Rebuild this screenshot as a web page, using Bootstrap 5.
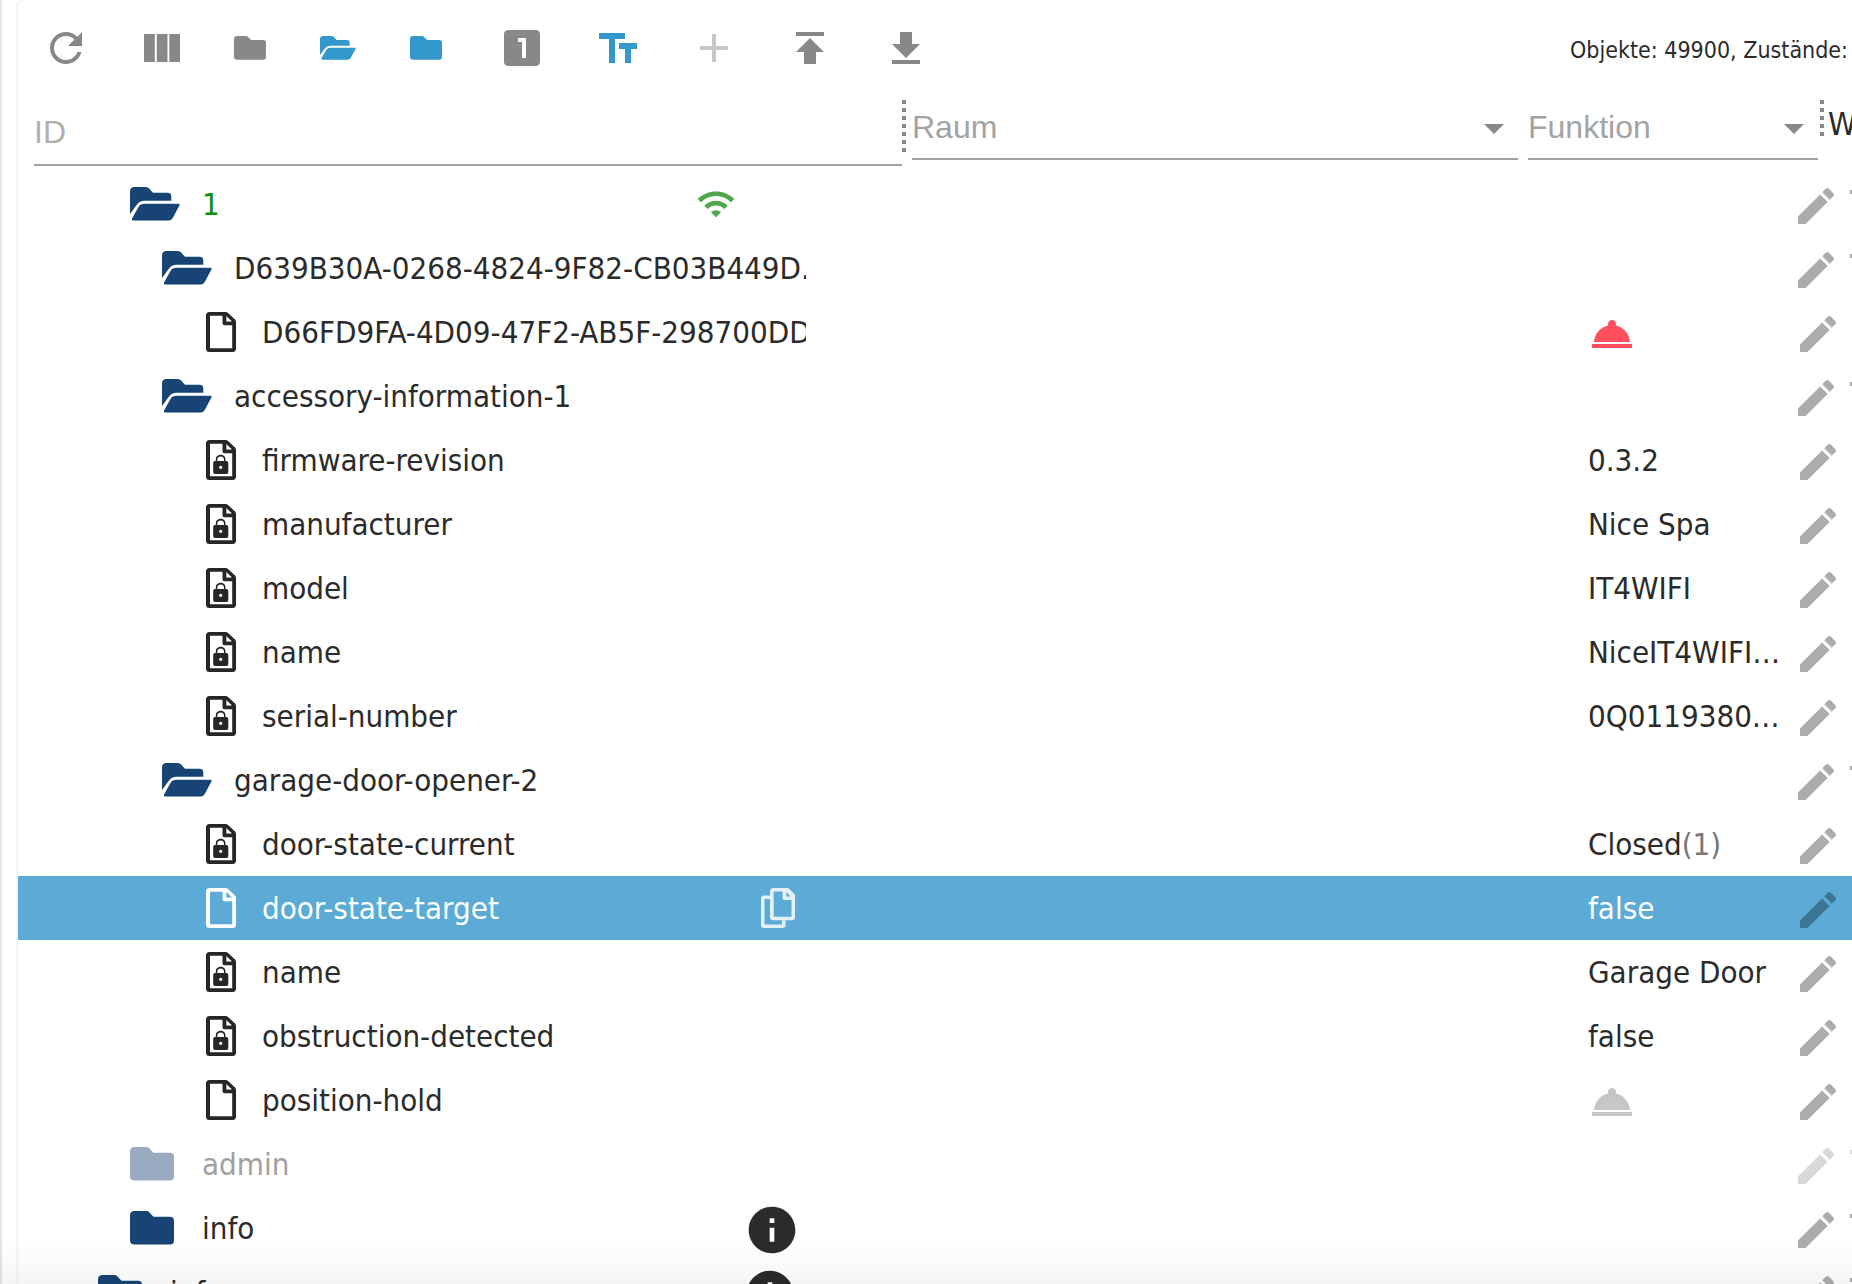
<!DOCTYPE html>
<html lang="de">
<head>
<meta charset="utf-8">
<meta name="viewport" content="width=device-width, initial-scale=1">
<title>Objekte</title>
<link rel="stylesheet" href="https://cdn.jsdelivr.net/npm/bootstrap@5.3.0/dist/css/bootstrap.min.css">
<style>
  :root { --ink:#2b2b2b; --muted:#a3a3a3; --tool:#888; --accent:#3399cc; --navy:#174475; }
  html, body { height:100%; }
  body { font-family:"DejaVu Sans Condensed","DejaVu Sans",sans-serif; font-size:31px; line-height:40px; color:var(--ink); background:#fff; overflow:hidden; }
  svg { display:block; fill:currentColor; flex:none; }
  .edge { width:2px; background:#e4e4e4; }
  .panel { margin-left:16px; min-width:0; border-top-left-radius:8px; box-shadow:0 0 3px rgba(0,0,0,.18); background:#fff; overflow:hidden; }
  .toolbar { height:96px; }
  .tools { min-width:0; }
  .tool { width:96px; height:96px; padding:0; border:0; background:none; color:var(--tool); display:flex; align-items:center; justify-content:center; flex:none; }
  .tool-sm { width:80px; }
  .tool-on { color:var(--accent); }
  .tool:disabled { color:#c6c6c6; }
  .counts { font-size:23px; line-height:32px; padding-top:3px; width:282px; flex:none; white-space:nowrap; }
  .filters { height:76px; padding:4px 0 0 16px; }
  .field { font-family:"Liberation Sans",Arial,sans-serif; font-size:32px; line-height:40px; }
  .field input, .field select { width:100%; border:0; border-bottom:2px solid var(--muted); border-radius:0; padding:0; background:none; color:var(--muted); appearance:none; outline:0; display:block; }
  .field input { height:66px; }
  .field select { height:60px; padding-bottom:4px; }
  .field input::placeholder { color:#b0b0b0; opacity:1; }
  .field-id { width:868px; flex:none; }
  .field-room { margin:0 10px 0 6px; }
  .field-fn { width:290px; margin-right:2px; flex:none; }
  .field-pick { position:relative; }
  .field-pick::after { content:""; position:absolute; right:14px; top:24px; border:10px solid transparent; border-top-color:var(--tool); border-bottom:0; pointer-events:none; }
  .grip { width:4px; height:56px; flex:none; background:repeating-linear-gradient(#888 0 4px,transparent 4px 8px); }
  .grip-sm { height:38px; }
  .value-head { width:24px; font-size:32px; line-height:48px; overflow:hidden; }
  .item { height:64px; white-space:nowrap; }
  .item-id { width:884px; padding-right:96px; flex:none; }
  .item-text { overflow:hidden; flex:1 1 0; min-width:0; }
  .lv0 { padding-left:80px; } .lv1 { padding-left:112px; } .lv2 { padding-left:144px; } .lv3 { padding-left:188px; }
  .kind { width:72px; flex:none; color:var(--navy); }
  .lv3 .kind { width:56px; color:#262626; }
  .state { margin-right:6px; flex:none; }
  .state-wifi { color:#4fa64b; margin-right:70px; }
  .state-copy, .state-wifi, .act, .ring { border:0; padding:0; background:none; }
  .state-copy { color:#e3f0f7; margin-right:11px; }
  .item-side { width:264px; flex:none; overflow:hidden; }
  .val { width:206px; flex:none; }
  .branch .val { width:204px; }
  .act { color:#acacac; flex:none; }
  .ring { color:#ff4f5e; }
  .ring:disabled { color:#c6c6c6; }
  .val-raw { color:#777; }
  .alive { color:#0a8f0a; }
  .item-on { background:#5babd6; color:#fff; }
  .item-on .kind { color:#fff; }
  .item-on .act { color:#3b7591; }
  .dim .kind { color:#9aaac0; } .dim .item-text { color:#a0a0a0; } .dim .act { color:#d8d8d8; }
  .fade-foot { position:fixed; left:0; right:0; bottom:0; height:44px; background:linear-gradient(rgba(0,0,0,0),rgba(0,0,0,.04)); pointer-events:none; }
</style>
<script src="https://cdn.jsdelivr.net/npm/bootstrap@5.3.0/dist/js/bootstrap.bundle.min.js"></script>
</head>
<body class="d-flex">
<svg width="0" height="0" class="position-absolute" aria-hidden="true">
  <symbol id="open" viewBox="0 0 50 34"><path d="M0 27V4.500Q0 0 4.500 0H16Q18 0 19.200 1.500L23 5.800H37.500Q41.300 5.800 41.300 9.500V13.700H14.500Q9.500 13.700 7 17.500Z"/><path d="M14.500 16.700H48.300Q50.200 16.700 49.400 18.500L43 30.500Q41.300 33.600 38 33.600H3.500Q1 33.600 2.200 31.300L8.500 20Q10.500 16.700 14.500 16.700Z"/></symbol>
  <symbol id="closed" viewBox="0 0 44 34"><path d="M4.500 0H16.500Q18 0 19 1L23.500 5.800H40Q44 5.800 44 9.800V29.500Q44 33.600 40 33.600H4.500Q0 33.600 0 29.500V4.500Q0 0 4.500 0Z"/></symbol>
  <symbol id="file" viewBox="0 0 30 40"><path fill-rule="evenodd" d="M3.500 0H19.500Q21 0 22 1L29 7.500Q30 8.500 30 10V36.500Q30 40 26.500 40H3.500Q0 40 0 36.500V3.500Q0 0 3.500 0ZM4 3.800V36.300H26.200V13.300H18.500Q16.500 13.300 16.500 11.300V3.800ZM20.300 4V9.600H26Z"/></symbol>
  <symbol id="locked" viewBox="0 0 30 40"><use href="#file" width="30" height="40"/><path fill-rule="evenodd" d="M9 21H9.800V19.500C9.800 13.300 19.500 13.300 19.500 19.500V21H20.500Q22.300 21 22.300 23V32Q22.300 34 20.300 34H9.200Q7.200 34 7.200 32V23Q7.200 21 9 21ZM11.300 21H18V19.500C18 15.500 11.300 15.500 11.300 19.500ZM14.700 25.800A1.600 1.600 0 1 0 14.710 25.800Z"/></symbol>
  <symbol id="pen" viewBox="0 0 24 24"><path d="M3 17.250V21h3.750L17.810 9.940l-3.750-3.750L3 17.250zM20.710 7.040c.39-.39.39-1.020 0-1.410l-2.340-2.340c-.39-.39-1.020-.39-1.410 0l-1.830 1.830 3.750 3.750 1.830-1.830z"/></symbol>
  <symbol id="bin" viewBox="0 0 24 24"><path d="M6 19c0 1.100.9 2 2 2h8c1.100 0 2-.9 2-2V7H6v12zM19 4h-3.500l-1-1h-5l-1 1H5v2h14V4z"/></symbol>
  <symbol id="bell" viewBox="0 0 24 24"><path d="M2 17h20v2H2zm11.840-9.210c.1-.24.16-.51.16-.79 0-1.100-.9-2-2-2s-2 .9-2 2c0 .28.06.55.16.79C6.250 8.600 3.270 11.930 3 16h18c-.27-4.070-3.250-7.400-7.160-8.210z"/></symbol>
  <symbol id="wifi" viewBox="0 0 24 24"><path d="M1 9l2 2c4.970-4.970 13.030-4.970 18 0l2-2C16.930 2.930 7.080 2.930 1 9zm8 8l3 3 3-3c-1.650-1.660-4.340-1.660-6 0zm-4-4l2 2c2.760-2.760 7.240-2.760 10 0l2-2C15.140 9.140 8.870 9.140 5 13z"/></symbol>
  <symbol id="info" viewBox="0 0 24 24"><path d="M12 2C6.480 2 2 6.480 2 12s4.480 10 10 10 10-4.480 10-10S17.520 2 12 2zm1 15h-2v-6h2v6zm0-8h-2V7h2v2z"/></symbol>
</svg>
<div class="edge flex-shrink-0"></div>
<main class="panel flex-grow-1">
  <div class="toolbar d-flex align-items-center">
    <div class="tools d-flex flex-grow-1">
      <button class="tool" aria-label="Aktualisieren"><svg width="48" height="48" viewBox="0 0 24 24"><path d="M17.650 6.350C16.200 4.900 14.210 4 12 4c-4.420 0-7.990 3.580-7.990 8s3.570 8 7.990 8c3.730 0 6.840-2.550 7.730-6h-2.080c-.82 2.330-3.040 4-5.650 4-3.310 0-6-2.690-6-6s2.690-6 6-6c1.660 0 3.140.69 4.220 1.780L13 11h7V4l-2.350 2.350z"/></svg></button>
      <button class="tool" aria-label="Spalten"><svg width="36" height="28" viewBox="0 0 36 28"><path d="M0 0h10.800v28H0zM12.800 0h10.700v28H12.800zM25.300 0H36v28H25.300z"/></svg></button>
      <div class="d-flex gap-2">
        <button class="tool tool-sm" aria-label="Alle schließen"><svg width="32" height="24" viewBox="0 0 44 34" preserveAspectRatio="none"><use href="#closed" width="44" height="34"/></svg></button>
        <button class="tool tool-sm tool-on" aria-label="Alle öffnen"><svg width="36" height="24" viewBox="0 0 50 34" preserveAspectRatio="none"><use href="#open" width="50" height="34"/></svg></button>
        <button class="tool tool-sm tool-on" aria-label="Ebene schließen"><svg width="32" height="24" viewBox="0 0 44 34" preserveAspectRatio="none"><use href="#closed" width="44" height="34"/></svg></button>
      </div>
      <div class="d-flex ms-2">
        <button class="tool" aria-label="Ebene 1"><svg width="48" height="48" viewBox="0 0 24 24"><path d="M19 3H5c-1.100 0-2 .9-2 2v14c0 1.100.9 2 2 2h14c1.100 0 2-.9 2-2V5c0-1.100-.9-2-2-2zm-5 14h-2V9h-2V7h4v10z"/></svg></button>
        <button class="tool tool-on" aria-label="Namen anzeigen"><svg width="38" height="30" viewBox="0 0 38 30"><path d="M0 0h26v6H16v24h-6V6H0zM20 10h18v6h-6v14h-6V16h-6z"/></svg></button>
        <button class="tool" disabled aria-label="Hinzufügen"><svg width="48" height="48" viewBox="0 0 24 24"><path d="M19 13h-6v6h-2v-6H5v-2h6V5h2v6h6v2z"/></svg></button>
        <button class="tool" aria-label="Hochladen"><svg width="48" height="48" viewBox="0 0 24 24"><path d="M5 4v2h14V4H5zm0 10h4v6h6v-6h4l-7-7-7 7z"/></svg></button>
        <button class="tool" aria-label="Herunterladen"><svg width="48" height="48" viewBox="0 0 24 24"><path d="M19 10h-4V4H9v6H5l7 7 7-7zM5 18v2h14v-2H5z"/></svg></button>
      </div>
    </div>
    <div class="counts">Objekte: 49900, Zustände:</div>
  </div>

  <div class="filters d-flex align-items-start">
    <div class="field field-id"><input type="text" placeholder="ID" aria-label="ID"></div>
    <div class="grip"></div>
    <div class="field field-pick field-room flex-grow-1"><select aria-label="Raum"><option>Raum</option></select></div>
    <div class="field field-pick field-fn"><select aria-label="Funktion"><option>Funktion</option></select></div>
    <div class="grip grip-sm me-1"></div>
    <div class="value-head">Wert</div>
  </div>

  <div role="tree" aria-label="Objekte">
    <div class="item branch d-flex align-items-center justify-content-between" role="treeitem">
      <div class="item-id lv1 d-flex align-items-center"><span class="kind"><svg width="50" height="34"><use href="#open"/></svg></span><span class="item-text alive">1</span><button class="state-wifi" aria-label="Verbunden"><svg width="40" height="40"><use href="#wifi"/></svg></button></div>
      <div class="item-side d-flex align-items-center"><span class="val"></span><button class="act mt-1" aria-label="Bearbeiten"><svg width="48" height="48"><use href="#pen"/></svg></button><button class="act mt-1" aria-label="Löschen"><svg width="48" height="48"><use href="#bin"/></svg></button></div>
    </div>
    <div class="item branch d-flex align-items-center justify-content-between" role="treeitem">
      <div class="item-id lv2 d-flex align-items-center"><span class="kind"><svg width="50" height="34"><use href="#open"/></svg></span><span class="item-text">D639B30A-0268-4824-9F82-CB03B449D.</span></div>
      <div class="item-side d-flex align-items-center"><span class="val"></span><button class="act mt-1" aria-label="Bearbeiten"><svg width="48" height="48"><use href="#pen"/></svg></button><button class="act mt-1" aria-label="Löschen"><svg width="48" height="48"><use href="#bin"/></svg></button></div>
    </div>
    <div class="item d-flex align-items-center justify-content-between" role="treeitem">
      <div class="item-id lv3 d-flex align-items-center"><span class="kind"><svg width="30" height="40"><use href="#file"/></svg></span><span class="item-text">D66FD9FA-4D09-47F2-AB5F-298700DD</span></div>
      <div class="item-side d-flex align-items-center"><span class="val d-flex"><button class="ring mt-1" aria-label="Auslösen"><svg width="48" height="48"><use href="#bell"/></svg></button></span><button class="act mt-1" aria-label="Bearbeiten"><svg width="48" height="48"><use href="#pen"/></svg></button></div>
    </div>
    <div class="item branch d-flex align-items-center justify-content-between" role="treeitem">
      <div class="item-id lv2 d-flex align-items-center"><span class="kind"><svg width="50" height="34"><use href="#open"/></svg></span><span class="item-text">accessory-information-1</span></div>
      <div class="item-side d-flex align-items-center"><span class="val"></span><button class="act mt-1" aria-label="Bearbeiten"><svg width="48" height="48"><use href="#pen"/></svg></button><button class="act mt-1" aria-label="Löschen"><svg width="48" height="48"><use href="#bin"/></svg></button></div>
    </div>
    <div class="item d-flex align-items-center justify-content-between" role="treeitem">
      <div class="item-id lv3 d-flex align-items-center"><span class="kind"><svg width="30" height="40"><use href="#locked"/></svg></span><span class="item-text">firmware-revision</span></div>
      <div class="item-side d-flex align-items-center"><span class="val">0.3.2</span><button class="act mt-1" aria-label="Bearbeiten"><svg width="48" height="48"><use href="#pen"/></svg></button></div>
    </div>
    <div class="item d-flex align-items-center justify-content-between" role="treeitem">
      <div class="item-id lv3 d-flex align-items-center"><span class="kind"><svg width="30" height="40"><use href="#locked"/></svg></span><span class="item-text">manufacturer</span></div>
      <div class="item-side d-flex align-items-center"><span class="val">Nice Spa</span><button class="act mt-1" aria-label="Bearbeiten"><svg width="48" height="48"><use href="#pen"/></svg></button></div>
    </div>
    <div class="item d-flex align-items-center justify-content-between" role="treeitem">
      <div class="item-id lv3 d-flex align-items-center"><span class="kind"><svg width="30" height="40"><use href="#locked"/></svg></span><span class="item-text">model</span></div>
      <div class="item-side d-flex align-items-center"><span class="val">IT4WIFI</span><button class="act mt-1" aria-label="Bearbeiten"><svg width="48" height="48"><use href="#pen"/></svg></button></div>
    </div>
    <div class="item d-flex align-items-center justify-content-between" role="treeitem">
      <div class="item-id lv3 d-flex align-items-center"><span class="kind"><svg width="30" height="40"><use href="#locked"/></svg></span><span class="item-text">name</span></div>
      <div class="item-side d-flex align-items-center"><span class="val">NiceIT4WIFI…</span><button class="act mt-1" aria-label="Bearbeiten"><svg width="48" height="48"><use href="#pen"/></svg></button></div>
    </div>
    <div class="item d-flex align-items-center justify-content-between" role="treeitem">
      <div class="item-id lv3 d-flex align-items-center"><span class="kind"><svg width="30" height="40"><use href="#locked"/></svg></span><span class="item-text">serial-number</span></div>
      <div class="item-side d-flex align-items-center"><span class="val">0Q0119380…</span><button class="act mt-1" aria-label="Bearbeiten"><svg width="48" height="48"><use href="#pen"/></svg></button></div>
    </div>
    <div class="item branch d-flex align-items-center justify-content-between" role="treeitem">
      <div class="item-id lv2 d-flex align-items-center"><span class="kind"><svg width="50" height="34"><use href="#open"/></svg></span><span class="item-text">garage-door-opener-2</span></div>
      <div class="item-side d-flex align-items-center"><span class="val"></span><button class="act mt-1" aria-label="Bearbeiten"><svg width="48" height="48"><use href="#pen"/></svg></button><button class="act mt-1" aria-label="Löschen"><svg width="48" height="48"><use href="#bin"/></svg></button></div>
    </div>
    <div class="item d-flex align-items-center justify-content-between" role="treeitem">
      <div class="item-id lv3 d-flex align-items-center"><span class="kind"><svg width="30" height="40"><use href="#locked"/></svg></span><span class="item-text">door-state-current</span></div>
      <div class="item-side d-flex align-items-center"><span class="val">Closed<span class="val-raw">(1)</span></span><button class="act mt-1" aria-label="Bearbeiten"><svg width="48" height="48"><use href="#pen"/></svg></button></div>
    </div>
    <div class="item item-on d-flex align-items-center justify-content-between" role="treeitem" aria-selected="true">
      <div class="item-id lv3 d-flex align-items-center"><span class="kind"><svg width="30" height="40"><use href="#file"/></svg></span><span class="item-text">door-state-target</span><button class="state-copy" aria-label="Kopieren"><svg width="34" height="40" viewBox="0 0 34 40"><path fill-rule="evenodd" d="M12.500 0H26Q27.500 0 28.500 1L33 5.500Q34 6.500 34 8V29Q34 32.300 30.500 32.300H12.500Q9 32.300 9 29V3.500Q9 0 12.500 0ZM12.700 3.500V28.700H30.500V12H24Q21.500 12 21.500 9.500V3.500ZM25.300 4V8.500H29.500Z"/><path d="M9 7.500V11H3.500V36.500H21V32.300H24.500V37Q24.500 40 21.500 40H3Q0 40 0 37V10.500Q0 7.500 3 7.500Z"/></svg></button></div>
      <div class="item-side d-flex align-items-center"><span class="val">false</span><button class="act mt-1" aria-label="Bearbeiten"><svg width="48" height="48"><use href="#pen"/></svg></button></div>
    </div>
    <div class="item d-flex align-items-center justify-content-between" role="treeitem">
      <div class="item-id lv3 d-flex align-items-center"><span class="kind"><svg width="30" height="40"><use href="#locked"/></svg></span><span class="item-text">name</span></div>
      <div class="item-side d-flex align-items-center"><span class="val">Garage Door</span><button class="act mt-1" aria-label="Bearbeiten"><svg width="48" height="48"><use href="#pen"/></svg></button></div>
    </div>
    <div class="item d-flex align-items-center justify-content-between" role="treeitem">
      <div class="item-id lv3 d-flex align-items-center"><span class="kind"><svg width="30" height="40"><use href="#locked"/></svg></span><span class="item-text">obstruction-detected</span></div>
      <div class="item-side d-flex align-items-center"><span class="val">false</span><button class="act mt-1" aria-label="Bearbeiten"><svg width="48" height="48"><use href="#pen"/></svg></button></div>
    </div>
    <div class="item d-flex align-items-center justify-content-between" role="treeitem">
      <div class="item-id lv3 d-flex align-items-center"><span class="kind"><svg width="30" height="40"><use href="#file"/></svg></span><span class="item-text">position-hold</span></div>
      <div class="item-side d-flex align-items-center"><span class="val d-flex"><button class="ring mt-1" disabled aria-label="Auslösen"><svg width="48" height="48"><use href="#bell"/></svg></button></span><button class="act mt-1" aria-label="Bearbeiten"><svg width="48" height="48"><use href="#pen"/></svg></button></div>
    </div>
    <div class="item branch dim d-flex align-items-center justify-content-between" role="treeitem">
      <div class="item-id lv1 d-flex align-items-center"><span class="kind"><svg width="44" height="34"><use href="#closed"/></svg></span><span class="item-text">admin</span></div>
      <div class="item-side d-flex align-items-center"><span class="val"></span><button class="act mt-1" aria-label="Bearbeiten"><svg width="48" height="48"><use href="#pen"/></svg></button><button class="act mt-1" aria-label="Löschen"><svg width="48" height="48"><use href="#bin"/></svg></button></div>
    </div>
    <div class="item branch d-flex align-items-center justify-content-between" role="treeitem">
      <div class="item-id lv1 d-flex align-items-center"><span class="kind"><svg width="44" height="34"><use href="#closed"/></svg></span><span class="item-text">info</span><span class="state mt-1"><svg width="56" height="56"><use href="#info"/></svg></span></div>
      <div class="item-side d-flex align-items-center"><span class="val"></span><button class="act mt-1" aria-label="Bearbeiten"><svg width="48" height="48"><use href="#pen"/></svg></button><button class="act mt-1" aria-label="Löschen"><svg width="48" height="48"><use href="#bin"/></svg></button></div>
    </div>
    <div class="item branch d-flex align-items-center justify-content-between" role="treeitem">
      <div class="item-id lv0 d-flex align-items-center"><span class="kind"><svg width="44" height="34"><use href="#closed"/></svg></span><span class="item-text">info</span><span class="state mt-1 me-2"><svg width="56" height="56"><use href="#info"/></svg></span></div>
      <div class="item-side d-flex align-items-center"><span class="val"></span><button class="act mt-1" aria-label="Bearbeiten"><svg width="48" height="48"><use href="#pen"/></svg></button><button class="act mt-1" aria-label="Löschen"><svg width="48" height="48"><use href="#bin"/></svg></button></div>
    </div>
  </div>
</main>
<div class="fade-foot"></div>
</body>
</html>
